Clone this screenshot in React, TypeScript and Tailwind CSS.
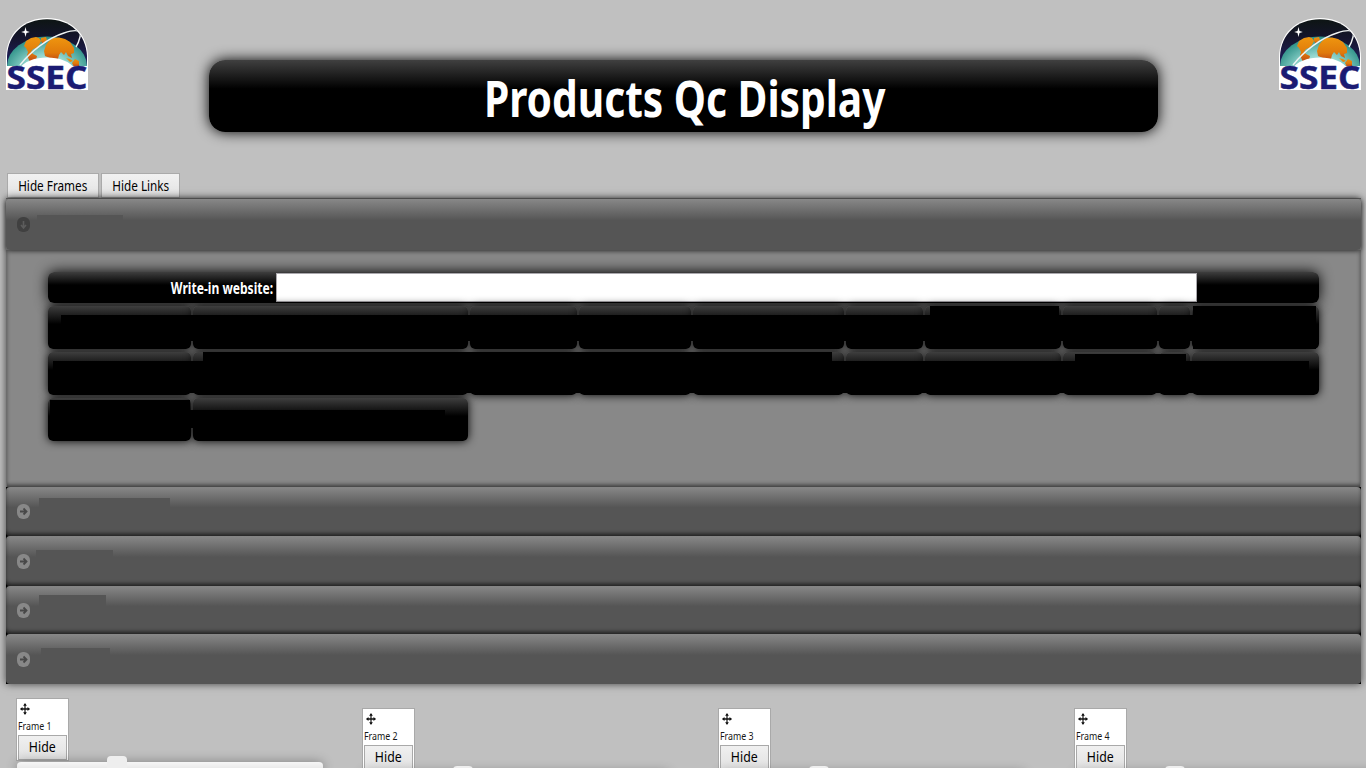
import React from "react";

function Logo() {
  return (
    <svg width="82" height="73" viewBox="0 0 82 73" className="block shrink-0 overflow-visible">
      <defs>
        <linearGradient id="sky" x1="0" y1="0" x2="0" y2="1">
          <stop offset="0" stopColor="#0d1512" />
          <stop offset="0.4" stopColor="#14142c" />
          <stop offset="1" stopColor="#24246a" />
        </linearGradient>
        <radialGradient id="sea" cx="0.5" cy="0.6" r="0.58">
          <stop offset="0" stopColor="#f2fffb" />
          <stop offset="0.5" stopColor="#93d6ce" />
          <stop offset="1" stopColor="#2d9087" />
        </radialGradient>
        <linearGradient id="land" x1="0" y1="0" x2="0" y2="1">
          <stop offset="0" stopColor="#ee950f" />
          <stop offset="0.6" stopColor="#e07a0b" />
          <stop offset="1" stopColor="#b83b18" />
        </linearGradient>
        <clipPath id="dome">
          <path d="M1 72V38C2 16 18 1.200 41 1.200S80 16 81 38v34z" />
        </clipPath>
      </defs>
      <path d="M0 72V40C0 15 18 0 41 0s41 15 41 40v32z" fill="#fff" />
      <g clipPath="url(#dome)">
        <rect x="0" y="0" width="82" height="50" fill="url(#sky)" />
        <ellipse cx="41" cy="48" rx="40" ry="29.500" fill="url(#sea)" />
        <g fill="url(#land)">
          <path d="M18 28l2-5 5-3 5-1 3 1 2 3-2 4-3 3-3 1-2 3 2 2 4 2-1 4-4 4-3-4-2-5 1-3-2-4z" />
          <path d="M35 20l5-1 1 3-4 4-2-3z" />
          <path d="M40 27l3-4 4-3 6-.5 6 1.500 5 3 4 6v5l-3 1 1 4-4-2-2-4-2 3-3-3-2 3-1 4-3 3-3 1-2-5-5-2-1-5z" />
          <path d="M60 40l4 1 3 2-3 1zM66 45l3-4 4 2v5l-5 1z" />
        </g>
        <path d="M12 52C18 43 29 39.500 41 39.500S64 43 70 52z" fill="#fff" />
        <path d="M14 47C25 33 42 20 58 15c12-4 18-3 16 4-1 4-2 7-4 10" fill="none" stroke="#eef2f2" strokeWidth="1.400" />
        <path d="M19.500 9l1 4 3.300 1-3.300 1-1 4-1-4-3.300-1 3.300-1z" fill="#fff" />
        <rect x="0" y="48" width="82" height="32" fill="#fff" />
      </g>
      <text x="0.500" y="71" textLength="81" lengthAdjust="spacingAndGlyphs" fontFamily="'Open Sans', sans-serif" fontSize="32" fontWeight="700" fill="#1b1b73" stroke="#1b1b73" strokeWidth="0.500">SSEC</text>
    </svg>
  );
}

function ArrowIcon({ down = false }: { down?: boolean }) {
  return (
    <svg width="13" height="15" viewBox="0 0 13 15" className="block shrink-0">
      <rect width="13" height="15" rx="6" fill={down ? "#404040" : "#888"} />
      {down ? (
        <path d="M6.500 4v7M4 8l2.500 3L9 8" fill="none" stroke="#5c5c5c" strokeWidth="1.600" />
      ) : (
        <path d="M3 7.500h6M6.500 4.500l3 3-3 3" fill="none" stroke="#484848" strokeWidth="1.800" />
      )}
    </svg>
  );
}

const barClass =
  "relative flex w-full items-center rounded-[4px] bg-[linear-gradient(#888_0%,#555_42%,#555_100%)] pl-[11px]";

const sections = [
  { height: "h-[49px]", shade: "shadow-[inset_0_-3px_4px_-1px_#000a]", mask: "left-[33px] top-[11px] h-[12px] w-[131px]" },
  { height: "h-[50px]", shade: "shadow-[inset_0_-3px_4px_-1px_#000a]", mask: "left-[30px] top-[14px] h-[8px] w-[77px]" },
  { height: "h-[48px]", shade: "shadow-[inset_0_-3px_4px_-1px_#000a]", mask: "left-[33px] top-[9px] h-[13px] w-[67px]" },
  { height: "h-[50px]", shade: "", mask: "left-[35px] top-[14px] h-[8px] w-[69px]" },
];

const cellClass =
  "h-[43px] rounded-[5px] bg-[linear-gradient(#3e3e3e_0%,#000_42%)] shadow-[0_0_10px_#000]";

const masks = [
  "left-[13px] top-[43px] h-[26px] w-[1132px]",
  "left-[882px] top-[34px] h-[35px] w-[129px]",
  "left-[1145px] top-[34px] h-[43px] w-[123px]",
  "left-[5px] top-[89px] h-[32px] w-[1256px]",
  "left-[155px] top-[80px] h-[41px] w-[629px]",
  "left-[1027px] top-[82px] h-[39px] w-[111px]",
  "left-[2px] top-[128px] h-[28px] w-[140px]",
  "left-[140px] top-[138px] h-[18px] w-[257px]",
];

function LinksGrid() {
  return (
    <div className="relative flex w-[1271px] flex-col gap-[3px]">
      <div className="flex h-[31px] items-center rounded-[6px] bg-[linear-gradient(#3e3e3e_0%,#000_42%)] shadow-[0_0_14px_#000]">
        <div className="flex w-[228px] justify-end pr-[3px]">
          <label className="origin-right scale-x-[0.78] whitespace-nowrap text-[15.500px] font-bold leading-5 text-white">Write-in website:</label>
        </div>
        <input className="h-[29px] w-[921px] border border-[#aaa8ad] bg-white outline-none" aria-label="Write-in website" />
      </div>
      <div className="grid grid-cols-[143px_274.5px_107.5px_112px_150.5px_77.5px_136px_93.5px_31.5px_127px] gap-x-[2px] gap-y-[3px]">
        {Array.from({ length: 22 }, (_, i) => (
          <div key={i} className={cellClass} />
        ))}
      </div>
      {masks.map((m) => (
        <div key={m} className={`absolute bg-black ${m}`} />
      ))}
    </div>
  );
}

function Frame({ n }: { n: number }) {
  return (
    <div className={n === 1 ? "w-[346px] shrink-0" : "w-[356px] shrink-0 pt-[10px]"}>
      <div className="flex h-[63px] w-[53px] flex-col border border-[#a9a9a9] bg-white pl-px pt-[4px]">
        <svg width="10" height="12" viewBox="0 0 12 13" preserveAspectRatio="none" className="ml-[2px] block shrink-0">
          <path d="M6 1v11M1 6.500h10" stroke="#111" strokeWidth="1.400" />
          <path d="M6 0l2.200 3H3.800zM6 13l2.200-3H3.800zM0 6.500l3-2.200v4.400zM12 6.500l-3-2.200v4.400z" fill="#111" />
        </svg>
        <div className="ml-[-0.5px] mt-[4px] h-[16px] origin-left scale-x-[0.84] whitespace-nowrap text-[10.500px] leading-[15px] text-[#161616]">Frame {n}</div>
        <button className="flex h-[25px] w-[49px] shrink-0 items-center justify-center border border-[#a9a9a9] bg-linear-to-b from-[#f0f0f0] to-[#e2e2e2] pb-px text-[14px] leading-5 text-black">
          <span className="scale-x-[0.88]">Hide</span>
        </button>
      </div>
      <div
        className={`relative ml-px mt-px h-[12px] w-[306px] rounded-[4px] shadow-[0_0_12px_#0005] ${
          n === 1 ? "bg-[linear-gradient(#f6f6f6,#dedede)]" : "bg-[#eee]"
        }`}
      >
        <div className="absolute left-[90px] top-[-6px] h-[18px] w-[20px] rounded-[4px] bg-[#eee]" />
      </div>
    </div>
  );
}

export default function App() {
  return (
    <main className="flex h-[768px] w-[1366px] flex-col overflow-hidden bg-[#c0c0c0] font-['Noto_Sans',sans-serif]">
      <header className="flex h-[173px] shrink-0 items-start pl-[6px] pt-[18px]">
        <Logo />
        <h1 className="ml-[121px] mr-[121px] mt-[42px] flex h-[72px] w-[949px] shrink-0 items-center justify-center rounded-[16px] bg-[linear-gradient(#404040_0%,#000_40%)] shadow-[0_0_14px_#000]">
          <span className="relative left-px top-[2px] scale-x-[0.814] whitespace-nowrap text-[50px] font-bold leading-[68px] text-white">Products Qc Display</span>
        </h1>
        <Logo />
      </header>
      <nav className="flex h-[25px] shrink-0 gap-[2px] pl-[7px]">
        <button className="flex h-[25px] w-[92px] items-center justify-center border border-[#aaa] bg-linear-to-b from-[#f1f1f1] to-[#e3e3e3] pt-[2px] text-[13.500px] text-black">
          <span className="scale-x-[0.87] whitespace-nowrap">Hide Frames</span>
        </button>
        <button className="flex h-[25px] w-[79px] items-center justify-center border border-[#aaa] bg-linear-to-b from-[#f1f1f1] to-[#e3e3e3] pt-[2px] text-[13.500px] text-black">
          <span className="scale-x-[0.87] whitespace-nowrap">Hide Links</span>
        </button>
      </nav>
      <section className="ml-[6px] w-[1355px] shrink-0 bg-black shadow-[0_0_8px_#000a]">
        <div className="h-px bg-[#5e5e5e]" />
        <div className="bg-[#888]">
          <div className={`${barClass} z-10 h-[51px] shadow-[0_1px_5px_#000a]`}>
            <ArrowIcon down />
            <div className="absolute left-[31px] top-[16px] h-[6px] w-[86px] bg-[#555]" />
          </div>
        </div>
        <div className="h-[237px] border-x border-[#6d6d6d] bg-[#888] pl-[41px] pt-[22px] shadow-[inset_0_-3px_4px_-1px_#0009]">
          <LinksGrid />
        </div>
        {sections.map((s) => (
          <div key={s.mask} className={`${barClass} ${s.height} ${s.shade}`}>
            <ArrowIcon />
            <div className={`absolute bg-[#555] ${s.mask}`} />
          </div>
        ))}
      </section>
      <section className="ml-[16px] mt-[14px] flex">
        {[1, 2, 3, 4].map((n) => (
          <Frame key={n} n={n} />
        ))}
      </section>
    </main>
  );
}
